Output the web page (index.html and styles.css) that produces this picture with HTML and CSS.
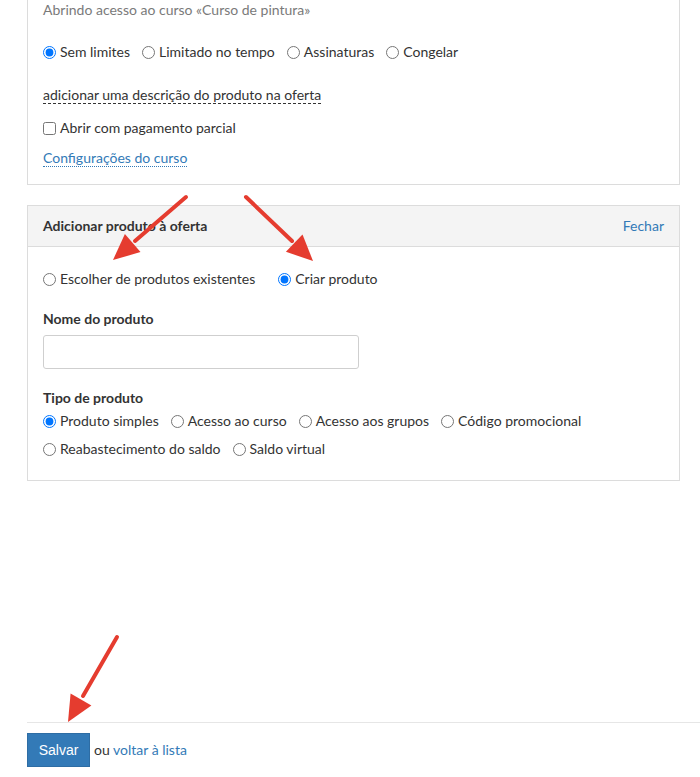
FILE: index.html
```html
<!DOCTYPE html>
<html lang="pt">
<head>
<meta charset="utf-8">
<title>Oferta</title>
<link rel="stylesheet" href="styles.css">
</head>
<body>
<div class="page">
  <section class="card card-access">
    <p class="muted">Abrindo acesso ao curso «Curso de pintura»</p>
    <div class="options options-access">
      <label class="opt"><input type="radio" name="access" checked>Sem limites</label>
      <label class="opt"><input type="radio" name="access">Limitado no tempo</label>
      <label class="opt"><input type="radio" name="access">Assinaturas</label>
      <label class="opt"><input type="radio" name="access">Congelar</label>
    </div>
    <div class="desc-row"><a class="dashed" href="#">adicionar uma descrição do produto na oferta</a></div>
    <label class="opt check-row"><input type="checkbox">Abrir com pagamento parcial</label>
    <div class="settings-row"><a class="dotted" href="#">Configurações do curso</a></div>
  </section>

  <section class="card card-product">
    <header class="card-head">
      <h2 class="card-title">Adicionar produto à oferta</h2>
      <a class="link" href="#">Fechar</a>
    </header>
    <div class="card-body">
      <div class="options options-source">
        <label class="opt"><input type="radio" name="source">Escolher de produtos existentes</label>
        <label class="opt"><input type="radio" name="source" checked>Criar produto</label>
      </div>
      <label class="field-label" for="pname">Nome do produto</label>
      <input class="text-input" id="pname" type="text">
      <div class="field-label type-label">Tipo de produto</div>
      <div class="options options-type">
        <label class="opt"><input type="radio" name="ptype" checked>Produto simples</label>
        <label class="opt"><input type="radio" name="ptype">Acesso ao curso</label>
        <label class="opt"><input type="radio" name="ptype">Acesso aos grupos</label>
        <label class="opt"><input type="radio" name="ptype">Código promocional</label>
        <label class="opt"><input type="radio" name="ptype">Reabastecimento do saldo</label>
        <label class="opt"><input type="radio" name="ptype">Saldo virtual</label>
      </div>
    </div>
  </section>

  <footer class="actions">
    <button class="btn-primary" type="button">Salvar</button>
    <span class="or">ou <a class="link" href="#">voltar à lista</a></span>
  </footer>
</div>

<svg class="annotations" width="700" height="777" viewBox="0 0 700 777" aria-hidden="true">
  <g stroke="#e53c2f" stroke-width="4" stroke-linecap="round" fill="none">
    <line x1="186" y1="197" x2="135" y2="241"/>
    <line x1="246" y1="197" x2="292" y2="241"/>
    <line x1="117" y1="637" x2="83" y2="696"/>
  </g>
  <g fill="#e53c2f">
    <polygon points="113,260 140.5,252.1 124.9,233.9"/>
    <polygon points="313,261 285.9,251.8 302.5,234.4"/>
    <polygon points="68,722 91.4,705.5 70.6,693.5"/>
  </g>
</svg>
</body>
</html>
```

FILE: styles.css
```css
* { box-sizing: border-box; }

html, body {
  margin: 0;
  padding: 0;
  background: #fff;
  overflow: hidden;
}

body {
  font-family: Lato, "Liberation Sans", Arial, sans-serif;
  font-size: 14px;
  line-height: 20px;
  color: #333;
  position: relative;
  width: 700px;
  height: 777px;
}

.page {
  padding-left: 27px;
}

.card {
  width: 653px;
  border: 1px solid #dcdcdc;
  background: #fff;
}

.card-access {
  margin-top: -16px;
  padding: 15px 15px 16px 15px;
}

.muted {
  margin: 0;
  color: #7a7a7a;
}

.options {
  display: flex;
  flex-wrap: wrap;
  column-gap: 12px;
}

.opt {
  display: inline-flex;
  align-items: center;
  white-space: nowrap;
  cursor: pointer;
}

.opt input {
  margin: 0 4px 0 0;
  width: 13px;
  height: 13px;
}

.options-access {
  margin-top: 22px;
}

.desc-row {
  margin-top: 23px;
  height: 20px;
}

.dashed {
  color: #333;
  text-decoration: none;
  border-bottom: 1px dashed #333;
}

.check-row {
  margin-top: 13px;
  display: flex;
}

.settings-row {
  margin-top: 10px;
  height: 20px;
}

.dotted {
  color: #337ab7;
  text-decoration: none;
  border-bottom: 1px dotted #337ab7;
}

.link {
  color: #337ab7;
  text-decoration: none;
}

.card-product {
  margin-top: 20px;
}

.card-head {
  display: flex;
  justify-content: space-between;
  align-items: center;
  height: 41px;
  padding: 0 15px;
  background: #f4f4f4;
  border-bottom: 1px solid #dcdcdc;
}

.card-title {
  margin: 0;
  font-size: 14px;
  font-weight: 700;
  line-height: 20px;
  color: #333;
}

.card-body {
  padding: 22px 15px 21px 15px;
}

.options-source {
  column-gap: 23px;
}

.field-label {
  display: block;
  margin-top: 20px;
  font-weight: 700;
  color: #333;
}

.text-input {
  display: block;
  margin-top: 6px;
  width: 316px;
  height: 34px;
  padding: 6px 12px;
  border: 1px solid #cfcfcf;
  border-radius: 3px;
  font: inherit;
  background: #fff;
}

.type-label {
  margin-top: 19px;
}

.options-type {
  margin-top: 3px;
  column-gap: 12px;
  row-gap: 8px;
}

.actions {
  margin-top: 241px;
  border-top: 1px solid #e6e6e6;
  padding-top: 10px;
  display: flex;
  align-items: center;
}

.btn-primary {
  width: 63px;
  height: 34px;
  padding: 0;
  margin: 0 4px 0 0;
  background: #337ab7;
  border: 1px solid #2e6da4;
  color: #fff;
  font-family: "Liberation Sans", Arial, sans-serif;
  font-size: 14px;
  cursor: pointer;
}

.or {
  color: #333;
}

.annotations {
  position: absolute;
  top: 0;
  left: 0;
  pointer-events: none;
}
```
